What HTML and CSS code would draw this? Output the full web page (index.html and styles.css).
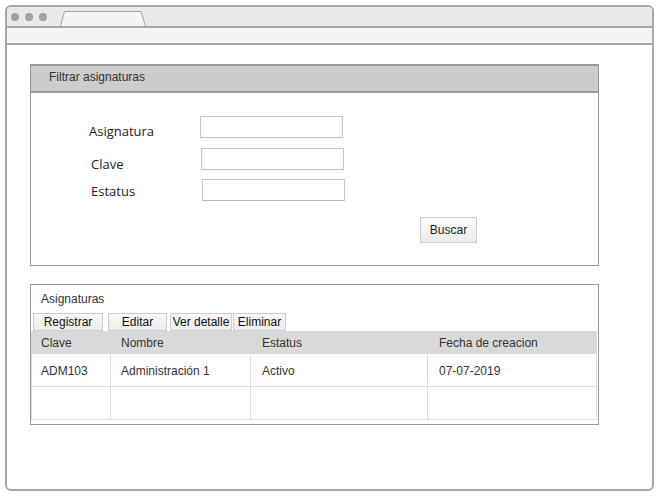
FILE: index.html
```html
<!DOCTYPE html>
<html lang="es">
<head>
<meta charset="utf-8">
<title>Filtrar asignaturas</title>
<link rel="stylesheet" href="styles.css">
</head>
<body>
<div class="window">
  <div class="tabbar">
    <span class="dot"></span><span class="dot"></span><span class="dot"></span>
    <svg class="tab" width="86" height="15" viewBox="0 0 86 15">
      <path d="M0.5 15 L4.5 0.5 L81 0.5 L85.5 15" fill="#f4f5f6" stroke="#a4a4a4" stroke-width="1"/>
    </svg>
  </div>
  <div class="addressbar"></div>
  <div class="content">
    <section class="panel filter">
      <div class="panel-header">Filtrar asignaturas</div>
      <div class="form">
        <div class="row r1"><label class="lbl">Asignatura</label><input class="field" type="text"></div>
        <div class="row r2"><label class="lbl">Clave</label><input class="field" type="text"></div>
        <div class="row r3"><label class="lbl">Estatus</label><input class="field" type="text"></div>
      </div>
      <div class="actions"><button class="btn-search">Buscar</button></div>
    </section>

    <section class="panel list">
      <div class="list-title">Asignaturas</div>
      <div class="toolbar">
        <button class="tbtn b-reg">Registrar</button>
        <button class="tbtn b-edit">Editar</button>
        <button class="tbtn b-ver">Ver detalle</button>
        <button class="tbtn b-del">Eliminar</button>
      </div>
      <table class="grid">
        <colgroup>
          <col class="c1"><col class="c2"><col class="c3"><col class="c4">
        </colgroup>
        <thead>
          <tr><th>Clave</th><th>Nombre</th><th>Estatus</th><th>Fecha de creacion</th></tr>
        </thead>
        <tbody>
          <tr><td>ADM103</td><td>Administración 1</td><td>Activo</td><td>07-07-2019</td></tr>
          <tr><td></td><td></td><td></td><td></td></tr>
        </tbody>
      </table>
    </section>
  </div>
</div>
</body>
</html>
```

FILE: styles.css
```css
html, body {
  margin: 0;
  padding: 0;
  background: #ffffff;
}
body {
  font-family: "Liberation Sans", Arial, sans-serif;
  font-size: 12px;
  color: #333333;
}

.window {
  margin: 5px 0 0 5px;
  width: 649px;
  height: 486px;
  box-sizing: border-box;
  border: 2px solid #a8a8a8;
  border-radius: 6px;
  overflow: hidden;
  display: flex;
  flex-direction: column;
  background: #ffffff;
}

.tabbar {
  height: 19px;
  flex: none;
  background: #e8e9ea;
  border-bottom: 2px solid #a9a9a9;
  display: flex;
  align-items: flex-end;
  padding-left: 4px;
}
.dot {
  width: 8px;
  height: 8px;
  border-radius: 50%;
  background: #a0a0a0;
  align-self: center;
  margin-right: 6px;
}
.tab {
  display: block;
  margin-left: 7px;
}

.addressbar {
  height: 15px;
  flex: none;
  background: #f4f5f6;
  border-bottom: 2px solid #a6a6a6;
}

.content {
  padding: 19px 0 0 23px;
}

.panel {
  width: 569px;
  box-sizing: border-box;
  border: 1px solid #999999;
}

/* Filter panel */
.filter {
  border-top-width: 2px;
  padding-bottom: 22px;
}
.panel-header {
  height: 25px;
  line-height: 22px;
  background: #cccccc;
  border-bottom: 2px solid #999999;
  padding-left: 18px;
  color: #333333;
}
.form {
  padding-top: 23px;
  display: flex;
  flex-direction: column;
}
.row {
  display: flex;
  align-items: center;
  height: 22px;
}
.r2 { margin-top: 10px; }
.r3 { margin-top: 9px; }
.lbl {
  font-family: "Open Sans", "Noto Sans", sans-serif;
  font-size: 13px;
  color: #222222;
  box-sizing: border-box;
}
.r1 .lbl { margin-left: 58px; width: 111px; padding-top: 8px; }
.r2 .lbl { margin-left: 60px; width: 110px; padding-top: 9px; }
.r3 .lbl { margin-left: 60px; width: 111px; padding-top: 2px; }
.field {
  width: 143px;
  height: 22px;
  box-sizing: border-box;
  margin: 0;
  padding: 0 4px;
  border: 1px solid #c6c6c6;
  border-bottom-color: #bdbdbd;
  background: #ffffff;
  outline: none;
}

.actions {
  margin-top: 16px;
  padding-left: 389px;
}
.btn-search {
  width: 57px;
  height: 26px;
  margin: 0;
  padding: 0;
  border: 1px solid #cccccc;
  background: linear-gradient(#fbfbfb, #ebebeb);
  font-family: "Liberation Sans", Arial, sans-serif;
  font-size: 12px;
  color: #222222;
}

/* List panel */
.list {
  margin-top: 18px;
  padding-bottom: 4px;
}
.list-title {
  height: 28px;
  line-height: 28px;
  padding-left: 10px;
  color: #333333;
}
.toolbar {
  display: flex;
  height: 18px;
  padding-left: 2px;
}
.tbtn {
  height: 18px;
  margin: 0;
  padding: 0;
  border: 1px solid #cccccc;
  background: linear-gradient(#f8f8f8, #ececec);
  font-family: "Liberation Sans", Arial, sans-serif;
  font-size: 12px;
  line-height: 16px;
  color: #111111;
}
.b-reg { width: 70px; margin-right: 5px; }
.b-edit { width: 59px; margin-right: 3px; }
.b-ver { width: 62px; margin-right: 1px; }
.b-del { width: 53px; }

.grid {
  width: 566px;
  table-layout: fixed;
  border-collapse: separate;
  border-spacing: 0;
}
.c1 { width: 80px; }
.c2 { width: 140px; }
.c3 { width: 177px; }
.c4 { width: 169px; }
.grid th {
  height: 23px;
  padding: 0 0 0 10px;
  background: #d9d9d9;
  text-align: left;
  font-weight: normal;
  color: #333333;
  box-sizing: border-box;
}
.grid td {
  height: 33px;
  box-sizing: border-box;
  padding: 1px 0 0 10px;
  border-right: 1px solid #dddddd;
  border-bottom: 1px solid #dddddd;
  color: #333333;
}
.grid th:nth-child(n+3),
.grid td:nth-child(n+3) {
  padding-left: 11px;
}
.grid td:first-child {
  border-left: 1px solid #dddddd;
  padding-left: 9px;
}
```
